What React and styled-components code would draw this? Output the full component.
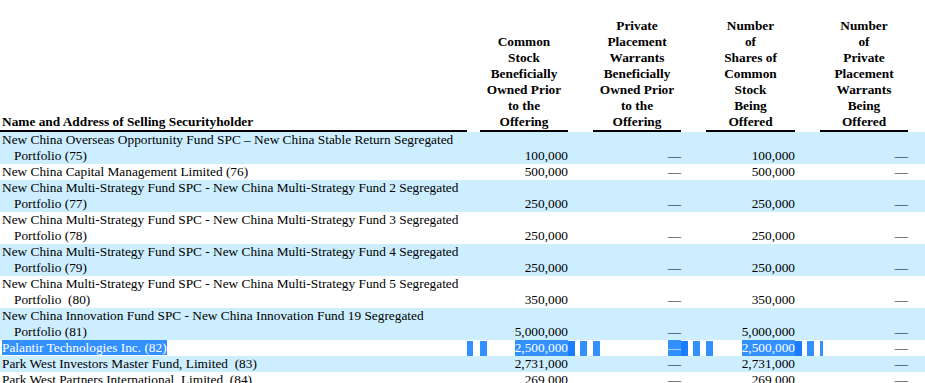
import React from 'react';
import styled, { createGlobalStyle } from 'styled-components';

const Global = createGlobalStyle`
  html, body { margin: 0; padding: 0; background: #ffffff; }
  body {
    font-family: "Liberation Serif", "Times New Roman", serif;
    font-size: 13.33px;
    color: #000000;
  }
`;

const Table = styled.table`
  table-layout: fixed;
  width: 925px;
  border-collapse: separate;
  border-spacing: 0;
  font-family: "Liberation Serif", "Times New Roman", serif;
  font-size: 13.33px;
  line-height: 16px;
  color: #000;
`;

const HeadRow = styled.tr`
  height: 132px;
`;

const HeadCell = styled.th`
  padding: 0 0 0 ${p => (p.$left ? '2px' : '0')};
  font-weight: bold;
  vertical-align: bottom;
  text-align: ${p => (p.$left ? 'left' : 'center')};
  border-bottom: ${p => (p.$rule ? '2px solid #000' : 'none')};
  white-space: nowrap;
`;

const Row = styled.tr`
  background: ${p => (p.$shade ? '#cceeff' : '#ffffff')};
`;

const NameCell = styled.td`
  padding: 0 0 0 14px;
  text-indent: -12px;
  white-space: pre;
  vertical-align: top;
  text-align: left;
`;

const NumCell = styled.td`
  padding: 0;
  text-align: right;
  vertical-align: bottom;
  white-space: nowrap;
`;

const GapCell = styled.td`
  padding: 0;
  vertical-align: bottom;
`;

const Sel = styled.span`
  background: #3390ff;
  color: #ffffff;
`;

const BarRow = styled.div`
  display: flex;
  align-items: center;
  justify-content: ${p => (p.$spread ? 'space-between' : 'flex-start')};
  gap: 5px;
  height: 16px;
  text-indent: 0;
`;

const Bar = styled.span`
  display: block;
  flex: none;
  width: ${p => p.$w}px;
  height: 15px;
  background: ${p => (p.$dark ? '#1a7dff' : '#3390ff')};
`;

const rows = [
  {
    name: ['New China Overseas Opportunity Fund SPC \u2013 New China Stable Return Segregated', 'Portfolio (75)'],
    common: '100,000', offered: '100,000',
  },
  { name: ['New China Capital Management Limited (76)'], common: '500,000', offered: '500,000' },
  {
    name: ['New China Multi-Strategy Fund SPC - New China Multi-Strategy Fund 2 Segregated', 'Portfolio (77)'],
    common: '250,000', offered: '250,000',
  },
  {
    name: ['New China Multi-Strategy Fund SPC - New China Multi-Strategy Fund 3 Segregated', 'Portfolio (78)'],
    common: '250,000', offered: '250,000',
  },
  {
    name: ['New China Multi-Strategy Fund SPC - New China Multi-Strategy Fund 4 Segregated', 'Portfolio (79)'],
    common: '250,000', offered: '250,000',
  },
  {
    name: ['New China Multi-Strategy Fund SPC - New China Multi-Strategy Fund 5 Segregated', 'Portfolio  (80)'],
    common: '350,000', offered: '350,000',
  },
  {
    name: ['New China Innovation Fund SPC - New China Innovation Fund 19 Segregated', 'Portfolio (81)'],
    common: '5,000,000', offered: '5,000,000',
  },
  { name: ['Palantir Technologies Inc. (82)'], common: '2,500,000', offered: '2,500,000', selected: true },
  { name: ['Park West Investors Master Fund, Limited  (83)'], common: '2,731,000', offered: '2,731,000' },
  { name: ['Park West Partners International, Limited  (84)'], common: '269,000', offered: '269,000' },
];

const DASH = '\u2014';

function NameText({ lines }) {
  return lines.map((l, i) => (
    <React.Fragment key={i}>
      {i > 0 && <br />}
      {l}
    </React.Fragment>
  ));
}

function PlainRow({ r, shade }) {
  return (
    <Row $shade={shade}>
      <NameCell><NameText lines={r.name} /></NameCell>
      <GapCell />
      <NumCell>{r.common}</NumCell>
      <GapCell />
      <NumCell>{DASH}</NumCell>
      <GapCell />
      <NumCell>{r.offered}</NumCell>
      <GapCell />
      <NumCell>{DASH}</NumCell>
      <GapCell />
    </Row>
  );
}

function SelectedRow({ r, shade }) {
  return (
    <Row $shade={shade}>
      <NameCell><Sel>{r.name[0]}</Sel></NameCell>
      <GapCell><BarRow><Bar $w={6} /></BarRow></GapCell>
      <NumCell><BarRow $spread><Bar $w={7} /><Sel>{r.common}</Sel></BarRow></NumCell>
      <GapCell><BarRow><Bar $dark $w={7} /><Bar $w={7} /></BarRow></GapCell>
      <NumCell><BarRow $spread><Bar $w={7} /><Sel>{DASH}</Sel></BarRow></NumCell>
      <GapCell><BarRow><Bar $dark $w={7} /><Bar $w={7} /></BarRow></GapCell>
      <NumCell><BarRow $spread><Bar $w={7} /><Sel>{r.offered}</Sel></BarRow></NumCell>
      <GapCell><BarRow><Bar $dark $w={7} /><Bar $w={7} /></BarRow></GapCell>
      <NumCell><BarRow $spread><Bar $w={3} /><span>{DASH}</span></BarRow></NumCell>
      <GapCell />
    </Row>
  );
}

const heads = [
  ['Common', 'Stock', 'Beneficially', 'Owned Prior', 'to the', 'Offering'],
  ['Private', 'Placement', 'Warrants', 'Beneficially', 'Owned Prior', 'to the', 'Offering'],
  ['Number', 'of', 'Shares of', 'Common', 'Stock', 'Being', 'Offered'],
  ['Number', 'of', 'Private', 'Placement', 'Warrants', 'Being', 'Offered'],
];

export default function App() {
  return (
    <>
      <Global />
      <Table>
        <colgroup>
          <col style={{ width: 467 }} />
          <col style={{ width: 13 }} />
          <col style={{ width: 88 }} />
          <col style={{ width: 25 }} />
          <col style={{ width: 88 }} />
          <col style={{ width: 25 }} />
          <col style={{ width: 89 }} />
          <col style={{ width: 25 }} />
          <col style={{ width: 88 }} />
          <col style={{ width: 17 }} />
        </colgroup>
        <thead>
          <HeadRow>
            <HeadCell $left $rule>Name and Address of Selling Securityholder</HeadCell>
            <HeadCell />
            {heads.map((h, i) => (
              <React.Fragment key={i}>
                <HeadCell $rule><NameText lines={h} /></HeadCell>
                <HeadCell />
              </React.Fragment>
            ))}
          </HeadRow>
        </thead>
        <tbody>
          {rows.map((r, i) =>
            r.selected ? (
              <SelectedRow key={i} r={r} shade={i % 2 === 0} />
            ) : (
              <PlainRow key={i} r={r} shade={i % 2 === 0} />
            )
          )}
        </tbody>
      </Table>
    </>
  );
}
